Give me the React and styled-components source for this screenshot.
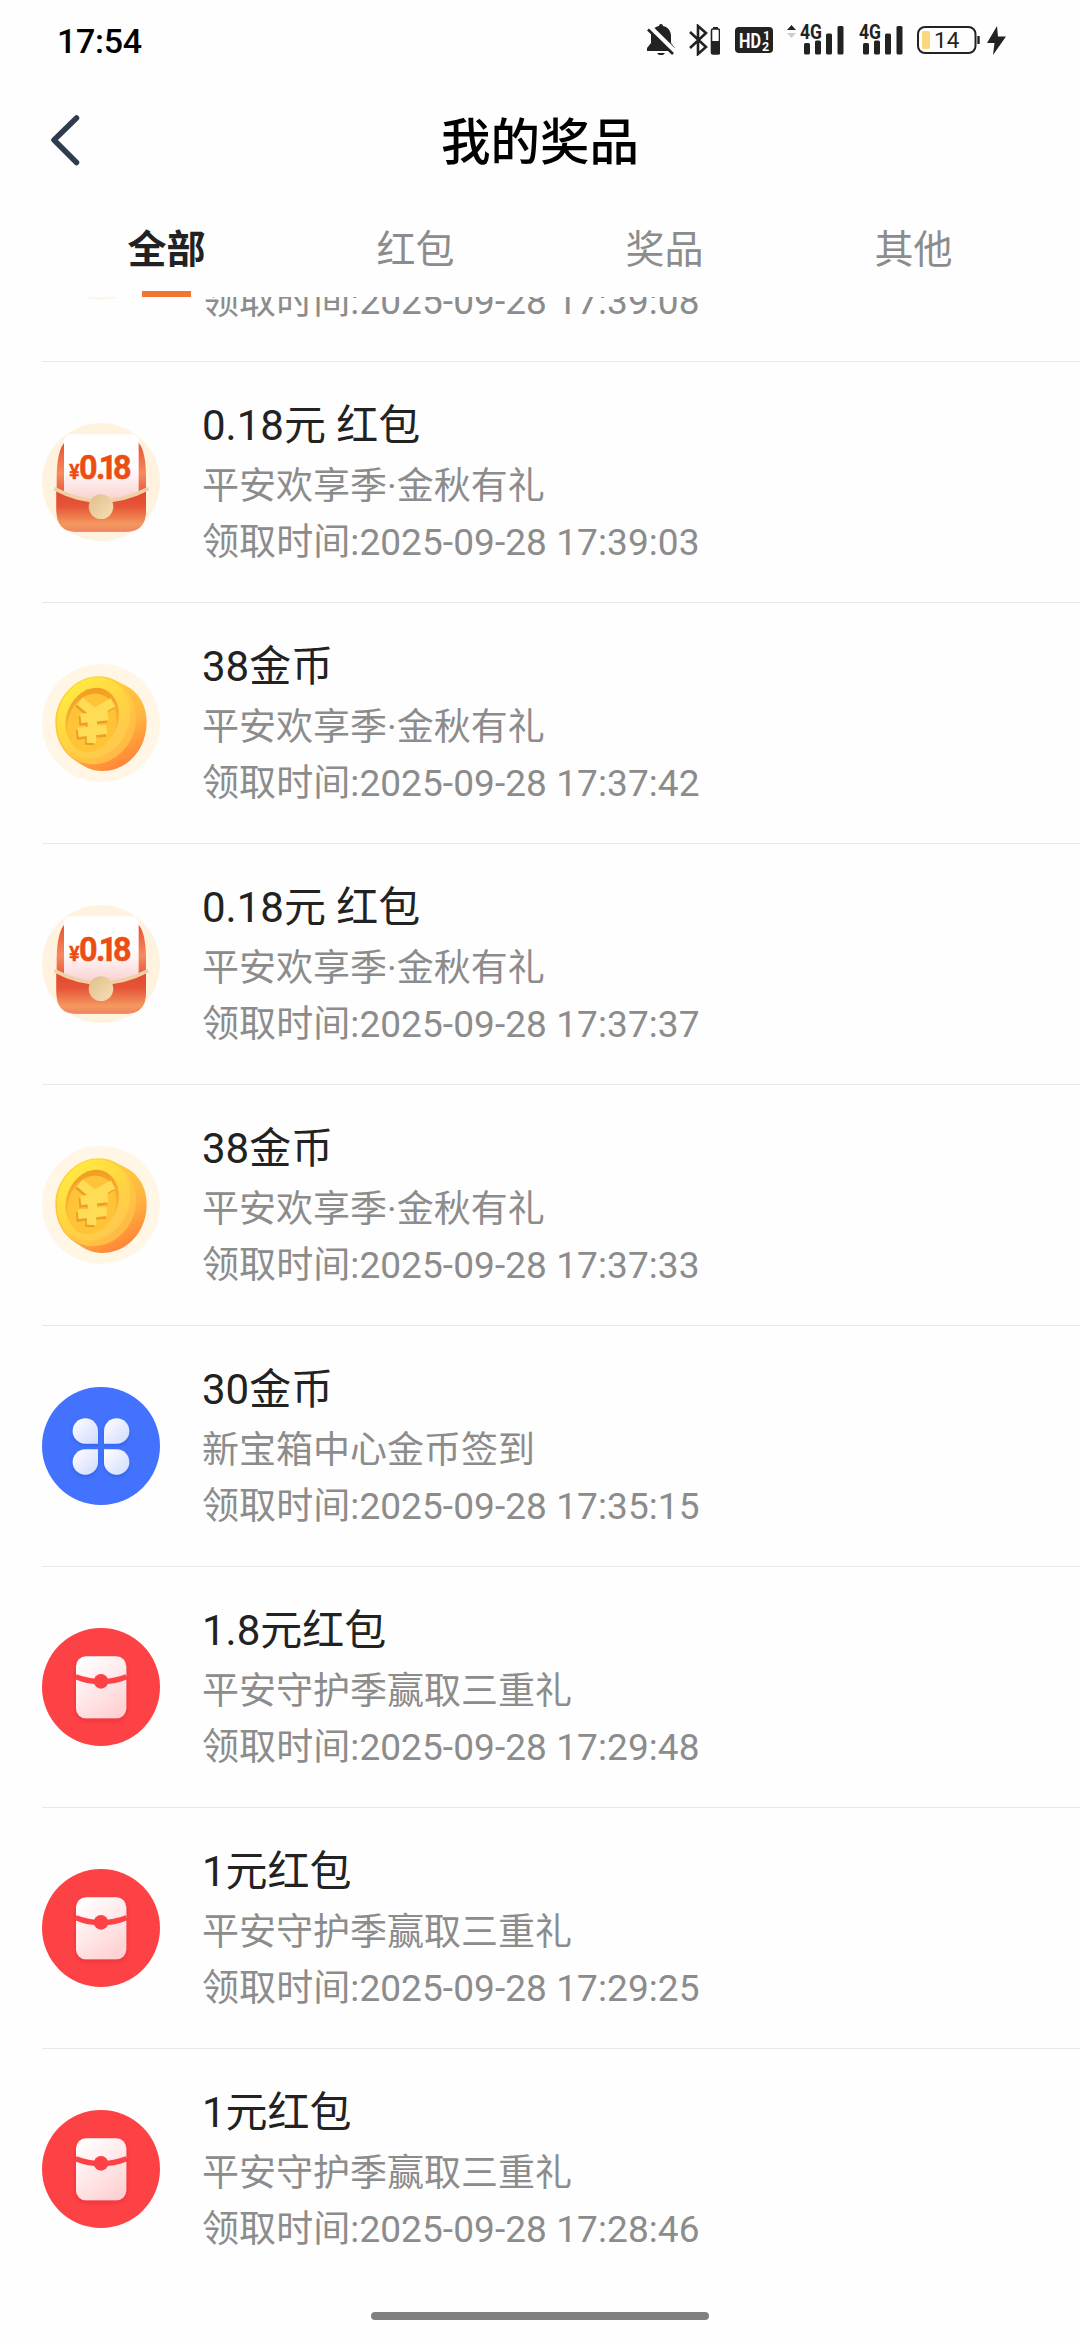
import React from "react";
import styled, { createGlobalStyle } from "styled-components";

const GlobalStyle = createGlobalStyle`
  * {
    box-sizing: border-box;
  }
  body {
    margin: 0;
    background: #fefefe;
    font-family: Roboto, "Noto Sans CJK SC", sans-serif;
  }
`;

const Page = styled.div`
  display: flex;
  flex-direction: column;
  width: 1080px;
  height: 2340px;
  overflow: hidden;
  background: #fefefe;
`;

const StatusBar = styled.div`
  display: flex;
  align-items: center;
  justify-content: space-between;
  height: 80px;
  padding: 0 74px 0 57px;
`;

const Clock = styled.span`
  font-size: 34px;
  font-weight: 500;
  line-height: 40px;
  padding-top: 2px;
  letter-spacing: -0.3px;
  color: #000;
`;

const StatusIcons = styled.div`
  display: flex;
  align-items: center;
  gap: ${(props) => props.$gap}px;
  color: #222;
  svg {
    display: block;
  }
`;

const Header = styled.header`
  display: grid;
  grid-template-columns: 120px 1fr 120px;
  align-items: center;
  height: 120px;
`;

const BackButton = styled.button`
  display: flex;
  border: none;
  background: none;
  padding: 0 0 0 49px;
`;

const Title = styled.h1`
  margin: 0;
  padding-top: 6px;
  font-size: 49.5px;
  font-weight: 500;
  line-height: 60px;
  text-align: center;
  color: #000;
`;

const Tabs = styled.nav`
  display: flex;
  height: 97px;
  padding: 0 42px;
`;

const Tab = styled.div`
  display: flex;
  flex: 1;
  flex-direction: column;
  align-items: center;
  justify-content: space-between;
  font-size: 39px;
  font-weight: ${(props) => (props.$active ? 700 : 400)};
  line-height: 100px;
  color: ${(props) => (props.$active ? "#222" : "#8c8c8c")};

  &::after {
    content: "";
    width: 49px;
    height: 6px;
    flex-shrink: 0;
    margin-top: -9px;
    background: ${(props) => (props.$active ? "#f27630" : "transparent")};
  }
`;

const ListViewport = styled.main`
  flex: 1;
  overflow: hidden;
`;

// the list is scrolled, the first prize is partly under the tabs
const PrizeList = styled.ul`
  list-style: none;
  margin: -176px 0 0;
  padding: 0 0 0 42px;
`;

const PrizeRow = styled.li`
  display: flex;
  align-items: center;
  gap: 42px;
  height: 241px;
  border-bottom: 1px solid #e8e8e8;

  &:last-child {
    border-bottom-color: transparent;
  }
  > svg {
    display: block;
    flex-shrink: 0;
  }
`;

const PrizeName = styled.div`
  font-size: 42px;
  line-height: 65px;
  color: #222;
`;

const PrizeSource = styled.div`
  font-size: 37px;
  line-height: 57px;
  color: #8c8c8c;
`;

const PrizeTime = styled(PrizeSource)`
  line-height: 56px;
  letter-spacing: 0.08px;
`;

const HomeArea = styled.footer`
  display: flex;
  justify-content: center;
  height: 28px;
`;

const HomeBar = styled.div`
  width: 338px;
  height: 8px;
  border-radius: 4px;
  background: #808080;
`;

function MutedIcon() {
  return (
    <svg width="28" height="32" viewBox="0 0 28 32" fill="currentColor">
      <path d="M14 0a2 2 0 0 1 2 2c5 1 8 5 8 10v7l4 5v3H0v-3l4-5v-7c0-5 3-9 8-10a2 2 0 0 1 2-2z" />
      <path d="M10 29h8l-2 2h-4z" />
      <path d="M2.500 3.500L28.500 29" stroke="#fefefe" strokeWidth="6" />
      <path d="M1 5.500L26 30" stroke="currentColor" strokeWidth="2.600" />
    </svg>
  );
}

function BluetoothIcon() {
  return (
    <svg width="31" height="32" viewBox="0 0 31 32" fill="none">
      <path
        d="M1 8l16 15-8 7V2l8 7L1 24"
        stroke="currentColor"
        strokeWidth="2.600"
      />
      <rect x="22.500" y="5" width="8" height="25" rx="1.500" stroke="currentColor" strokeWidth="1.600" />
      <path d="M24 3h5v2h-5zM22 17h9v13h-9z" fill="currentColor" />
    </svg>
  );
}

function HdIcon() {
  return (
    <svg width="38" height="26" viewBox="0 0 38 26">
      <rect width="38" height="26" rx="4" fill="currentColor" />
      <g fill="#fefefe" fontFamily="Roboto, sans-serif" fontWeight="700">
        <text x="4" y="21" fontSize="21" textLength="22" lengthAdjust="spacingAndGlyphs">HD</text>
        <text x="28" y="12.500" fontSize="12.500">1</text>
        <text x="27" y="24" fontSize="12.500">2</text>
      </g>
    </svg>
  );
}

function SignalIcon({ arrows }) {
  return (
    <svg
      width={arrows ? 57 : 44}
      height="32"
      viewBox={arrows ? "-13 0 57 32" : "0 0 44 32"}
      fill="currentColor"
    >
      {arrows && (
        <>
          <path d="M-13 6L-8.500 1l4.500 5z" />
          <path d="M-13 9h9l-4.500 5z" fill="#ccc" />
        </>
      )}
      <text
        x="0"
        y="14.500"
        fontSize="19.500"
        fontWeight="700"
        fontFamily="Roboto, sans-serif"
        textLength="22"
        lengthAdjust="spacingAndGlyphs"
      >
        4G
      </text>
      <rect x="4" y="19" width="6" height="11.500" rx="1.500" />
      <rect x="15" y="16.500" width="6" height="14" rx="1.500" />
      <rect x="26" y="9.500" width="6" height="21" rx="1.500" />
      <rect x="37.500" y="2" width="6" height="28.500" rx="1.500" />
    </svg>
  );
}

function BatteryIcon() {
  return (
    <svg width="63" height="28" viewBox="0 0 63 28" fill="none">
      <rect x="1" y="1" width="57.500" height="26" rx="7" stroke="currentColor" strokeWidth="2" />
      <rect x="5" y="5" width="8" height="18" rx="2" fill="#f9d77c" />
      <path d="M61.500 10v8" stroke="currentColor" strokeWidth="2.400" />
      <text x="17" y="22" fontSize="22.500" fill="currentColor" fontFamily="Roboto, sans-serif">14</text>
    </svg>
  );
}

function BoltIcon() {
  return (
    <svg width="19" height="29" viewBox="0 0 19 29" fill="currentColor">
      <path d="M10 0L0 17h7.500L6 29l13-18.500h-8z" />
    </svg>
  );
}

function BackIcon() {
  return (
    <svg width="32" height="52" viewBox="0 0 32 52" fill="none">
      <path
        d="M27.500 4L5 26l22.500 22.500"
        stroke="#2f3b4f"
        strokeWidth="5.500"
        strokeLinecap="round"
        strokeLinejoin="round"
      />
    </svg>
  );
}

function CashIcon() {
  return (
    <svg width="118" height="118" viewBox="36 38 354 354">
      <defs>
        <linearGradient id="cashBody" x1="0" y1="0" x2="0" y2="1">
          <stop offset="0" stopColor="#e8502f" />
          <stop offset="0.350" stopColor="#f58a60" />
          <stop offset="0.620" stopColor="#e4502f" />
          <stop offset="1" stopColor="#f3a070" />
        </linearGradient>
        <linearGradient id="cashPaper" x1="0" y1="0" x2="0" y2="1">
          <stop offset="0.500" stopColor="#fff" />
          <stop offset="1" stopColor="#fbcfd0" />
        </linearGradient>
        <linearGradient id="cashFront" x1="0" y1="0" x2="0" y2="1">
          <stop offset="0" stopColor="#e2472c" />
          <stop offset="0.400" stopColor="#e65537" />
          <stop offset="0.820" stopColor="#f5985f" />
          <stop offset="1" stopColor="#ee8563" />
        </linearGradient>
        <linearGradient id="cashSeal" x1="0" y1="0" x2="1" y2="1">
          <stop offset="0" stopColor="#e0bf8c" />
          <stop offset="1" stopColor="#f6dfb4" />
        </linearGradient>
      </defs>
      <circle cx="213" cy="215" r="177" fill="#fff3df" />
      <path d="M104 96q-22 22-24 100v100q0 68 56 68h154q58 0 58-68V196q-1-78-24-100z" fill="url(#cashBody)" />
      <path d="M102 92q0-20 20-20h184q20 0 20 20v180H102z" fill="url(#cashPaper)" />
      <path d="M79 238q134 70 269 0v62q0 64-58 64H136q-57 0-57-64z" fill="url(#cashFront)" />
      <path d="M73 235q138 74 282 0" fill="none" stroke="#f0d0a6" strokeWidth="11" />
      <circle cx="213" cy="289" r="37" fill="url(#cashSeal)" />
      <g fill="#eb4d13" stroke="#eb4d13" fontFamily="Roboto, sans-serif" fontWeight="700">
        <text x="117" y="205" fontSize="60" strokeWidth="1">¥</text>
        <text x="147 198 206 249" y="206" fontSize="97" strokeWidth="1.500">0.18</text>
      </g>
    </svg>
  );
}

function CoinIcon() {
  return (
    <svg width="118" height="118" viewBox="36 41 354 354">
      <defs>
        <linearGradient id="coinSide" x1="0.250" y1="0.100" x2="0.700" y2="1">
          <stop offset="0" stopColor="#ffd43b" />
          <stop offset="0.600" stopColor="#ffb340" />
          <stop offset="1" stopColor="#ff8236" />
        </linearGradient>
        <linearGradient id="coinRim" x1="0" y1="0.300" x2="1" y2="0.700">
          <stop offset="0" stopColor="#ffe23f" />
          <stop offset="1" stopColor="#ffb844" />
        </linearGradient>
        <linearGradient id="coinFace" x1="0" y1="0.200" x2="1" y2="0.800">
          <stop offset="0" stopColor="#ffec42" />
          <stop offset="0.500" stopColor="#ffd540" />
          <stop offset="1" stopColor="#ffc652" />
        </linearGradient>
        <linearGradient id="coinInner" x1="0.300" y1="0" x2="0.700" y2="1">
          <stop offset="0" stopColor="#f29a22" />
          <stop offset="0.500" stopColor="#f8b234" />
          <stop offset="1" stopColor="#ffd84c" />
        </linearGradient>
      </defs>
      <circle cx="213" cy="218" r="177" fill="#fff6e6" />
      <path
        d="M76 215C76 145 135 76 208 78c32 0 50 14 76 26 44 22 66 62 66 112 0 82-58 146-134 146-36 0-56-16-78-30-42-26-62-68-62-117z"
        fill="url(#coinSide)"
      />
      <ellipse cx="200" cy="214" rx="116" ry="130" transform="rotate(24 200 214)" fill="url(#coinRim)" />
      <ellipse cx="191" cy="203" rx="107" ry="124" transform="rotate(24 191 203)" fill="url(#coinFace)" />
      <ellipse cx="187" cy="208" rx="78" ry="98" transform="rotate(20 187 208)" fill="url(#coinInner)" />
      <ellipse cx="185" cy="218" rx="71" ry="90" transform="rotate(20 185 218)" fill="#ffc338" />
      <g fill="none" strokeWidth="28">
        <path
          d="M147 154l44 36 58-32M150 208l84-8M142 250l88-9M187 186l-5 94"
          stroke="#ee9d25"
          transform="translate(-3 4)"
        />
        <path d="M149 152l44 36 56-32M152 204l82-8M144 246l86-9M189 184l-5 94" stroke="#ffdc55" />
      </g>
    </svg>
  );
}

function CloverIcon() {
  return (
    <svg width="118" height="118" viewBox="36 35 354 354">
      <defs>
        <linearGradient id="petal" x1="0" y1="0" x2="1" y2="1">
          <stop offset="0" stopColor="#fff" />
          <stop offset="1" stopColor="#d0dafd" />
        </linearGradient>
        <filter id="petalShadow" x="-20%" y="-20%" width="140%" height="140%">
          <feDropShadow dx="0" dy="6" stdDeviation="5" floodColor="#1f4ccc" floodOpacity="0.400" />
        </filter>
      </defs>
      <circle cx="213" cy="212" r="177" fill="#4272fe" />
      <g fill="url(#petal)" filter="url(#petalShadow)">
        <path d="M204 205h-38a38 38 0 1 1 38-38z" />
        <path d="M222 205v-38a38 38 0 1 1 38 38z" />
        <path d="M204 222v38a38 38 0 1 1-38-38z" />
        <path d="M222 222h38a38 38 0 1 1-38 38z" />
      </g>
    </svg>
  );
}

function EnvelopeIcon() {
  return (
    <svg width="118" height="118" viewBox="36 38 354 354">
      <defs>
        <linearGradient id="envelope" x1="0.200" y1="0" x2="0.800" y2="1">
          <stop offset="0" stopColor="#fff" />
          <stop offset="1" stopColor="#ffcfd1" />
        </linearGradient>
        <filter id="envelopeShadow" x="-20%" y="-20%" width="140%" height="140%">
          <feDropShadow dx="0" dy="6" stdDeviation="6" floodColor="#c41f26" floodOpacity="0.350" />
        </filter>
      </defs>
      <circle cx="213" cy="215" r="177" fill="#fd4246" />
      <rect x="138" y="123" width="151" height="186" rx="30" fill="url(#envelope)" filter="url(#envelopeShadow)" />
      <path d="M137 184q76 30 153 0" fill="none" stroke="#fd4246" strokeWidth="16" />
      <circle cx="213" cy="198" r="22" fill="#fd4246" />
    </svg>
  );
}

const icons = {
  cash: CashIcon,
  coin: CoinIcon,
  clover: CloverIcon,
  envelope: EnvelopeIcon,
};

const tabs = ["全部", "红包", "奖品", "其他"];

const prizes = [
  { icon: "coin", name: "38金币", source: "平安欢享季·金秋有礼", time: "2025-09-28 17:39:08" },
  { icon: "cash", name: "0.18元 红包", source: "平安欢享季·金秋有礼", time: "2025-09-28 17:39:03" },
  { icon: "coin", name: "38金币", source: "平安欢享季·金秋有礼", time: "2025-09-28 17:37:42" },
  { icon: "cash", name: "0.18元 红包", source: "平安欢享季·金秋有礼", time: "2025-09-28 17:37:37" },
  { icon: "coin", name: "38金币", source: "平安欢享季·金秋有礼", time: "2025-09-28 17:37:33" },
  { icon: "clover", name: "30金币", source: "新宝箱中心金币签到", time: "2025-09-28 17:35:15" },
  { icon: "envelope", name: "1.8元红包", source: "平安守护季赢取三重礼", time: "2025-09-28 17:29:48" },
  { icon: "envelope", name: "1元红包", source: "平安守护季赢取三重礼", time: "2025-09-28 17:29:25" },
  { icon: "envelope", name: "1元红包", source: "平安守护季赢取三重礼", time: "2025-09-28 17:28:46" },
];

function Prize({ prize }) {
  const Icon = icons[prize.icon];
  return (
    <PrizeRow>
      <Icon />
      <div>
        <PrizeName>{prize.name}</PrizeName>
        <PrizeSource>{prize.source}</PrizeSource>
        <PrizeTime>领取时间:{prize.time}</PrizeTime>
      </div>
    </PrizeRow>
  );
}

export default function App() {
  const [activeTab, setActiveTab] = React.useState("全部");

  return (
    <>
      <GlobalStyle />
      <Page>
        <StatusBar>
          <Clock>17:54</Clock>
          <StatusIcons $gap={14.5}>
            <MutedIcon />
            <BluetoothIcon />
            <HdIcon />
            <SignalIcon arrows />
            <SignalIcon />
            <StatusIcons $gap={7}>
              <BatteryIcon />
              <BoltIcon />
            </StatusIcons>
          </StatusIcons>
        </StatusBar>
        <Header>
          <BackButton aria-label="返回">
            <BackIcon />
          </BackButton>
          <Title>我的奖品</Title>
        </Header>
        <Tabs>
          {tabs.map((tab) => (
            <Tab key={tab} $active={tab === activeTab} onClick={() => setActiveTab(tab)}>
              {tab}
            </Tab>
          ))}
        </Tabs>
        <ListViewport>
          <PrizeList>
            {prizes.map((prize) => (
              <Prize key={prize.time} prize={prize} />
            ))}
          </PrizeList>
        </ListViewport>
        <HomeArea>
          <HomeBar />
        </HomeArea>
      </Page>
    </>
  );
}
